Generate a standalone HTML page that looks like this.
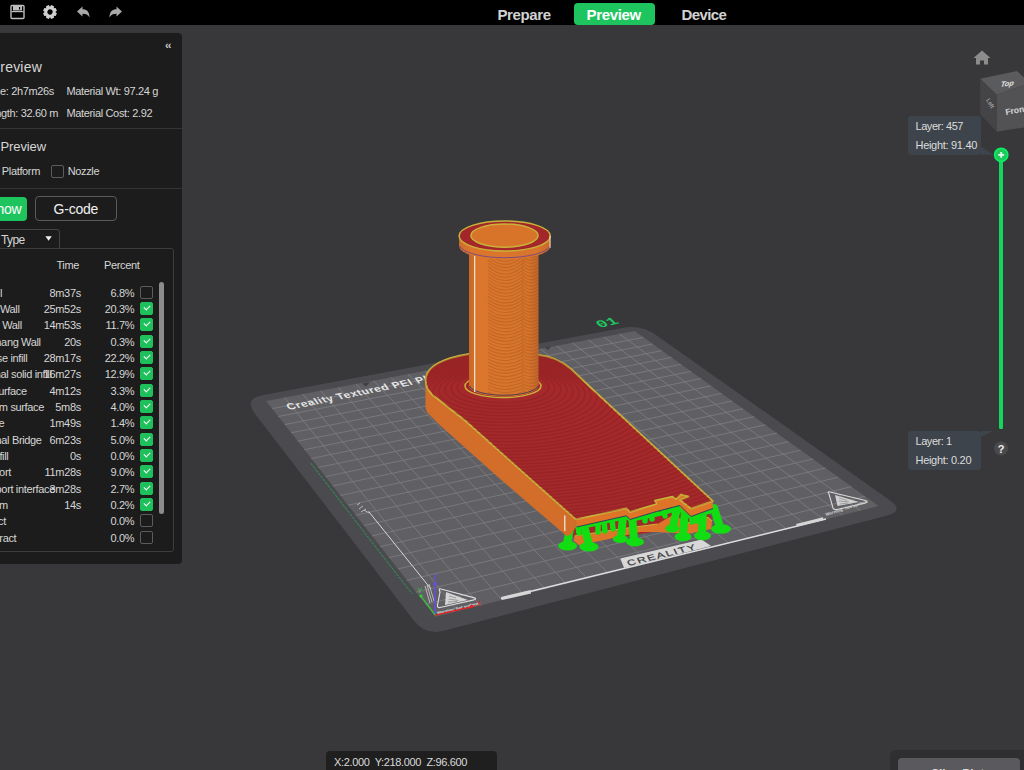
<!DOCTYPE html>
<html><head><meta charset="utf-8">
<style>
html,body{margin:0;padding:0}
body{width:1024px;height:770px;overflow:hidden;position:relative;background:#38383a;font-family:"Liberation Sans",sans-serif;color:#d8d8d8}
.a{position:absolute;white-space:pre;line-height:1}
#scene{position:absolute;left:0;top:0}
#topbar{position:absolute;left:0;top:0;width:1024px;height:25px;background:#000}
#panel{position:absolute;left:-10px;top:33px;width:192px;height:530.5px;background:#1c1c1c;border-radius:4px}
.t11{font-size:11px;letter-spacing:-0.35px;color:#d6d6d6}
.cb{position:absolute;left:150px;width:11px;height:11px;border:1px solid #5c5c5c;border-radius:2px}
.cbk{background:#1ec05c;border-color:#1ec05c}
.cbk::after{content:"";position:absolute;left:3px;top:2px;width:5px;height:3px;border-left:1.5px solid #fff;border-bottom:1.5px solid #fff;transform:rotate(-45deg)}
.tip{position:absolute;background:#3d444b;border-radius:3px}
</style></head><body>
<svg id="scene" width="1024" height="770" viewBox="0 0 1024 770">
<defs>
<linearGradient id="tubeg2" x1="469" x2="538.5" y1="0" y2="0" gradientUnits="userSpaceOnUse">
<stop offset="0" stop-color="#c66826"/><stop offset="0.08" stop-color="#d2702a"/><stop offset="0.12" stop-color="#dc762d"/><stop offset="0.85" stop-color="#d8742c"/><stop offset="1" stop-color="#c0662a"/></linearGradient>
<linearGradient id="tubeg" x1="459" x2="550.5" y1="0" y2="0" gradientUnits="userSpaceOnUse">
<stop offset="0" stop-color="#cf6e2a"/><stop offset="0.15" stop-color="#dc762d"/><stop offset="0.85" stop-color="#d8742c"/><stop offset="1" stop-color="#c8692a"/></linearGradient>
<clipPath id="slabclip"><path d="M537.8,354.8 C552,356 563,362 571,369 L603.4,399.4 L712.9,501.2 L691,508.7 L680,500 L688.6,496.7 L681.3,494.5 L676,499 L672.5,496.7 L655,500.4 L656.4,504 L630,512.1 L626.4,508.4 L575.9,519.4 L465,420.5 L447.5,406.8 L437.7,399 C428,393 424.5,386 426,377 C428.5,366 444,358 469,354 Z"/></clipPath>
<clipPath id="tubeclip"><path d="M469,250 L469,386 A34.75,10.5 0 0 0 538.5,386 L538.5,250 Z"/></clipPath>
</defs>
<path d="M255.1,413.9 Q243.5,398.8 262.2,395.3 L622.5,327.9 Q641.2,324.4 656.7,335.4 L889.5,499.9 Q905.0,510.9 886.6,515.7 L443.8,630.8 Q425.4,635.6 413.8,620.5 Z" fill="#4b4b4f"/>
<polygon points="266.2,400.9 634.7,331.0 878.6,506.1 435.5,616.7" fill="#606064"/>
<g stroke="#7f7f83" stroke-width="0.8">
<line x1="284.4" y1="397.4" x2="457.9" y2="611.1"/>
<line x1="272.3" y1="408.6" x2="643.6" y2="337.4"/>
<line x1="302.5" y1="394.0" x2="480.1" y2="605.6"/>
<line x1="278.5" y1="416.5" x2="652.7" y2="344.0"/>
<line x1="320.5" y1="390.6" x2="502.1" y2="600.1"/>
<line x1="284.8" y1="424.6" x2="662.0" y2="350.6"/>
<line x1="338.2" y1="387.2" x2="523.8" y2="594.7"/>
<line x1="291.2" y1="432.8" x2="671.5" y2="357.4"/>
<line x1="355.9" y1="383.9" x2="545.3" y2="589.3"/>
<line x1="297.8" y1="441.2" x2="681.1" y2="364.3"/>
<line x1="373.4" y1="380.6" x2="566.6" y2="584.0"/>
<line x1="304.5" y1="449.7" x2="690.9" y2="371.4"/>
<line x1="390.7" y1="377.3" x2="587.6" y2="578.7"/>
<line x1="311.4" y1="458.5" x2="700.9" y2="378.6"/>
<line x1="407.9" y1="374.0" x2="608.4" y2="573.5"/>
<line x1="318.4" y1="467.4" x2="711.1" y2="385.9"/>
<line x1="425.0" y1="370.8" x2="629.0" y2="568.4"/>
<line x1="325.6" y1="476.6" x2="721.6" y2="393.4"/>
<line x1="441.9" y1="367.6" x2="649.4" y2="563.3"/>
<line x1="332.9" y1="485.9" x2="732.2" y2="401.0"/>
<line x1="458.7" y1="364.4" x2="669.6" y2="558.3"/>
<line x1="340.4" y1="495.5" x2="743.0" y2="408.8"/>
<line x1="475.3" y1="361.2" x2="689.6" y2="553.3"/>
<line x1="348.1" y1="505.2" x2="754.1" y2="416.7"/>
<line x1="491.8" y1="358.1" x2="709.3" y2="548.4"/>
<line x1="355.9" y1="515.2" x2="765.4" y2="424.8"/>
<line x1="508.2" y1="355.0" x2="728.9" y2="543.5"/>
<line x1="363.9" y1="525.5" x2="776.9" y2="433.1"/>
<line x1="524.5" y1="351.9" x2="748.3" y2="538.6"/>
<line x1="372.1" y1="535.9" x2="788.7" y2="441.5"/>
<line x1="540.6" y1="348.8" x2="767.4" y2="533.8"/>
<line x1="380.5" y1="546.6" x2="800.7" y2="450.2"/>
<line x1="556.6" y1="345.8" x2="786.4" y2="529.1"/>
<line x1="389.1" y1="557.6" x2="813.0" y2="459.0"/>
<line x1="572.5" y1="342.8" x2="805.2" y2="524.4"/>
<line x1="398.0" y1="568.9" x2="825.5" y2="468.0"/>
<line x1="588.2" y1="339.8" x2="823.8" y2="519.8"/>
<line x1="407.0" y1="580.4" x2="838.4" y2="477.2"/>
<line x1="603.8" y1="336.9" x2="842.3" y2="515.2"/>
<line x1="416.3" y1="592.2" x2="851.5" y2="486.6"/>
<line x1="619.3" y1="333.9" x2="860.5" y2="510.6"/>
<line x1="425.8" y1="604.3" x2="864.9" y2="496.3"/>
</g>

<!-- object -->
<!-- bed decorations -->
<g id="deco">
  <text x="0" y="0" font-family="Liberation Sans" font-weight="bold" font-size="11.5" letter-spacing="0.62" fill="#e6e6e6" transform="matrix(0.98,-0.2,0.5,0.72,289,410)">Creality Textured PEI Plate</text>
  <polygon points="362,383.5 370,382 366,386.5" fill="#3e3e42"/>
  <polygon points="545,347.5 551,346.5 548,350" fill="#3e3e42"/>
  <text x="0" y="0" font-family="Liberation Mono" font-weight="bold" font-size="17" fill="#1ec45e" transform="matrix(0.97,-0.24,0.55,0.55,600,328)">01</text>
  <!-- left green dashed line -->
  <line x1="310.7" y1="463.1" x2="412.2" y2="594" stroke="#2a9a55" stroke-width="1" stroke-dasharray="3,1"/>
  <!-- white diagonal line + icon -->
  <path d="M368.6,511.4 L430.7,588.6" stroke="#d8d8d8" stroke-width="1" fill="none"/>
  <path d="M357,505 l3,-2 M359,509 l4,-3 M361,512 l5,-3 M364,510 l5,3" stroke="#d0d0d0" stroke-width="0.8" fill="none"/>
  <!-- bottom-left triangle logo -->
  <path d="M441,589 Q438,588 440,592 L437.5,605 Q437,608 440,607.5 L474,599.8 Q477,598.8 474.5,597.8 Z" fill="none" stroke="#dcdcdc" stroke-width="1.2"/>
  <polygon points="446,592 468,599.9 445,605" fill="#d4d4d4"/>
  <path d="M449,596 l7,2 M448.5,599 l10,1.5 M448,602 l9,-0.5" stroke="#8a8a8a" stroke-width="0.8"/>
  <path d="M425,586 L430,603 M427,585 L432,602 M429,584 L434,601" stroke="#cfcfcf" stroke-width="0.8"/>
  <!-- axes -->
  <line x1="435.2" y1="615.1" x2="435.2" y2="583" stroke="#6a4af0" stroke-width="1.3"/>
  <polygon points="433.2,585 437.2,585 435.2,580" fill="#6a4af0"/>
  <text x="433.5" y="579" font-family="Liberation Sans" font-size="7" fill="#6a4af0">Z</text>
  <line x1="435.2" y1="615.1" x2="421" y2="596.5" stroke="#30d030" stroke-width="1.2"/>
  <circle cx="421" cy="596" r="1.6" fill="#30d030"/>
  <text x="417.5" y="593" font-family="Liberation Sans" font-size="7" fill="#30d030">Y</text>
  <text x="0" y="0" font-family="Liberation Sans" font-size="4.3" font-weight="bold" fill="#e0e0e0" transform="matrix(0.97,-0.23,0.3,0.9,437.5,614.5)">Warning: hot surface</text>
  <line x1="435.2" y1="615.1" x2="473" y2="606.5" stroke="#e02020" stroke-width="1.3"/>
  <polygon points="470,605 476,605.5 471,608.5" fill="#e02020"/>
  <text x="476.5" y="605.5" font-family="Liberation Sans" font-size="7" fill="#e02020">X</text>
  <!-- bottom edge white ruler -->
  <polyline points="501,598.5 530,591.5 826,519" fill="none" stroke="#dedede" stroke-width="1.4"/>
  <polygon points="501,597 530.5,590 531,593.5 502,600" fill="#d6d6d6"/>
  <polygon points="796,524 823,517.3 823.5,520 797,526.5" fill="#d6d6d6"/>
  <!-- CREALITY label -->
  <polygon points="620.3,558.6 701.6,539.5 711.1,545.9 624.1,568.1" fill="#d8d8d8"/>
  <text x="0" y="0" font-family="Liberation Sans" font-weight="normal" font-size="12" letter-spacing="1.6" fill="#3a3a3c" stroke="#3a3a3c" stroke-width="0.3" transform="matrix(0.97,-0.24,0.3,0.62,628.5,566)">CREALITY</text>
  <!-- right triangle logo -->
  <path d="M830,492 Q827,491 829,494 L833,508 Q834,510 837,509.5 L865,503 Q868,502 865.5,500.5 Z" fill="none" stroke="#d8d8d8" stroke-width="1.1"/>
  <polygon points="835,495 859,502 837.5,506" fill="#cfcfcf"/>
  <path d="M839,498 l8,2.5 M839,501 l10,1 M840,504 l8,-1" stroke="#8a8a8a" stroke-width="0.7"/>
  <text x="0" y="0" font-family="Liberation Sans" font-size="4.5" font-weight="bold" fill="#d0d0d0" transform="matrix(0.95,-0.3,0.3,0.9,826,516)">Warning: hot surface</text>
</g>
<g id="obj">
  <!-- lower base strips (behind supports) -->
  <polygon fill="#a3262a" points="568.6,529.2 618.4,521 630,518 655,512 674,509 690,513 708,513 712,518 700,525 660,531 620,537 577,543"/>
  <polygon fill="#dd7428" points="574.4,536 618.4,529.2 657.6,524 674.2,514.3 686.9,523.1 708.4,517.2 712,521 711.3,529 688.8,533.8 657.6,532 640,531.9 618.4,537 579.3,545.3 574,541"/>
  <polyline fill="none" stroke="#c9b23a" stroke-width="1" points="574.4,536 618.4,529.2 657.6,524"/>
  <polyline fill="none" stroke="#c9b23a" stroke-width="1" points="686.9,523.1 708.4,517.2 712,521"/>
  <!-- supports -->
  <g stroke="#12dc12" stroke-linecap="round" fill="none">
    <path stroke-width="8" d="M571,524 L567,543 M584,525 L589,545 M623,516 L621,537 M632,514 L634,540 M677,508 L673,527 M685,510 L683,535 M703,508 L702,533 M714,508 L720,527"/>
    <path stroke-width="5.5" d="M578,526 L579,533 M598,522 L598,532 M604,521 L605,531 M612,519 L613,529 M645,512 L645,521 M652,510 L652,519 M662,507 L665,516 M692,513 L692,522 M697,512 L697,521"/>
  </g>
  <g fill="#12dc12">
    <polygon points="576,524 626,513 630,517 656,509 660,512 676,506 690,514 712,507 713,513 690,519 678,511 660,516 630,522 626,519 578,530"/>
    <ellipse cx="567.6" cy="545.8" rx="9.5" ry="4.8"/>
    <ellipse cx="589" cy="546.8" rx="9.5" ry="4.8"/>
    <ellipse cx="620.3" cy="539" rx="7.5" ry="4"/>
    <ellipse cx="635" cy="541.9" rx="9" ry="4.5"/>
    <ellipse cx="672.2" cy="528.5" rx="7" ry="4"/>
    <ellipse cx="683" cy="536.8" rx="8.5" ry="4.5"/>
    <ellipse cx="702.5" cy="535.8" rx="8.5" ry="4.5"/>
    <ellipse cx="721" cy="529" rx="10" ry="4.8"/>
  </g>
  <!-- slab wall -->
  <path fill="#d26e2a" d="M425.4,376 L425.5,406.8 C426,410 427,412 428,413.3 L434.5,419.8 L439.7,425 L501.3,480 L566.6,536.1 L570,535 L575.9,527 L575.9,519.4 L465,420.5 L447.5,406.8 L437.7,399 C428,393 424.5,386 426,377 Z"/>
  <line x1="564.8" y1="515.5" x2="564.8" y2="531" stroke="#f0f0f0" stroke-width="1.2"/>
  <!-- front face bands -->
  <polygon fill="#dd7428" points="575.9,519.4 626.4,508.4 630,512.1 656.4,504 655,500.4 672.5,496.7 676,499 681.3,494.5 688.6,496.7 680,500 691,508.7 712.9,501.2 713,508.5 691,516.5 680,507.5 680,505 656.4,511.5 630,519.5 626.4,515.8 576.5,527"/>
  <polyline fill="none" stroke="#1e2a6a" stroke-width="0.8" points="576.5,527 626.4,515.8 630,519.5 656.4,511.5 680,505.5 691,516.5 713,508.5"/>
  <!-- slab top -->
  <path fill="#a52a2c" stroke="#c9b23a" stroke-width="1.8" stroke-linejoin="round" d="M537.8,354.8 C552,356 563,362 571,369 L603.4,399.4 L712.9,501.2 L691,508.7 L680,500 L688.6,496.7 L681.3,494.5 L676,499 L672.5,496.7 L655,500.4 L656.4,504 L630,512.1 L626.4,508.4 L575.9,519.4 L465,420.5 L447.5,406.8 L437.7,399 C428,393 424.5,386 426,377 C428.5,366 444,358 469,354 Z"/>
<g clip-path="url(#slabclip)" fill="none" stroke="#7e1a1e" stroke-width="1.6" opacity="0.32"><ellipse cx="503" cy="387.2" rx="46.0" ry="15.6"/><ellipse cx="503" cy="388.4" rx="52.0" ry="17.7"/><ellipse cx="503" cy="389.6" rx="58.0" ry="19.7"/><ellipse cx="503" cy="390.8" rx="64.0" ry="21.8"/><ellipse cx="503" cy="392.0" rx="70.0" ry="23.8"/><ellipse cx="503" cy="393.2" rx="76.0" ry="25.8"/><ellipse cx="503" cy="394.4" rx="82.0" ry="27.9"/><ellipse cx="503" cy="395.6" rx="88.0" ry="29.9"/><ellipse cx="503" cy="396.8" rx="94.0" ry="32.0"/><ellipse cx="503" cy="398.0" rx="100.0" ry="34.0"/><ellipse cx="503" cy="399.2" rx="106.0" ry="36.0"/><ellipse cx="503" cy="400.4" rx="112.0" ry="38.1"/><ellipse cx="503" cy="401.6" rx="118.0" ry="40.1"/><ellipse cx="503" cy="402.8" rx="124.0" ry="42.2"/><ellipse cx="503" cy="404.0" rx="130.0" ry="44.2"/><ellipse cx="503" cy="405.2" rx="136.0" ry="46.2"/><ellipse cx="503" cy="406.4" rx="142.0" ry="48.3"/><ellipse cx="503" cy="407.6" rx="148.0" ry="50.3"/><ellipse cx="503" cy="408.8" rx="154.0" ry="52.4"/><ellipse cx="503" cy="410.0" rx="160.0" ry="54.4"/><ellipse cx="503" cy="411.2" rx="166.0" ry="56.4"/><ellipse cx="503" cy="412.4" rx="172.0" ry="58.5"/><ellipse cx="503" cy="413.6" rx="178.0" ry="60.5"/><ellipse cx="503" cy="414.8" rx="184.0" ry="62.6"/><ellipse cx="503" cy="416.0" rx="190.0" ry="64.6"/><ellipse cx="503" cy="417.2" rx="196.0" ry="66.6"/><ellipse cx="503" cy="418.4" rx="202.0" ry="68.7"/><ellipse cx="503" cy="419.6" rx="208.0" ry="70.7"/><ellipse cx="503" cy="420.8" rx="214.0" ry="72.8"/><ellipse cx="503" cy="422.0" rx="220.0" ry="74.8"/><ellipse cx="503" cy="423.2" rx="226.0" ry="76.8"/><ellipse cx="503" cy="424.4" rx="232.0" ry="78.9"/><ellipse cx="503" cy="425.6" rx="238.0" ry="80.9"/><ellipse cx="503" cy="426.8" rx="244.0" ry="83.0"/><ellipse cx="503" cy="428.0" rx="250.0" ry="85.0"/><ellipse cx="503" cy="429.2" rx="256.0" ry="87.0"/><ellipse cx="503" cy="430.4" rx="262.0" ry="89.1"/><ellipse cx="503" cy="431.6" rx="268.0" ry="91.1"/><ellipse cx="503" cy="432.8" rx="274.0" ry="93.2"/><ellipse cx="503" cy="434.0" rx="280.0" ry="95.2"/><ellipse cx="503" cy="435.2" rx="286.0" ry="97.2"/><ellipse cx="503" cy="436.4" rx="292.0" ry="99.3"/><ellipse cx="503" cy="437.6" rx="298.0" ry="101.3"/><ellipse cx="503" cy="438.8" rx="304.0" ry="103.4"/><ellipse cx="503" cy="440.0" rx="310.0" ry="105.4"/><ellipse cx="503" cy="441.2" rx="316.0" ry="107.4"/><ellipse cx="503" cy="442.4" rx="322.0" ry="109.5"/></g>
  <!-- cylinder base ring -->
  <ellipse cx="503" cy="386" rx="38" ry="11.5" fill="#a3262a" stroke="#c9b23a" stroke-width="1.5"/>
  <!-- tube -->
  <path d="M469,250 L469,386 A34.75,10.5 0 0 0 538.5,386 L538.5,250 Z" fill="url(#tubeg2)"/>
  <path d="M469.5,386 A34.5,10.5 0 0 0 538,386" fill="none" stroke="#1e2a6a" stroke-width="0.8"/>
  <g id="moire" clip-path="url(#tubeclip)"><path d="M488,250.0 Q505,266.0 523,250.0 M522,251.5 Q531,262.7 540,251.5 M488,253.3 Q505,269.1 523,253.3 M522,254.8 Q531,265.9 540,254.8 M488,256.6 Q505,272.2 523,256.6 M522,258.1 Q531,269.0 540,258.1 M488,259.9 Q505,275.3 523,259.9 M522,261.4 Q531,272.2 540,261.4 M488,263.2 Q505,278.4 523,263.2 M522,264.7 Q531,275.4 540,264.7 M488,266.5 Q505,281.6 523,266.5 M522,268.0 Q531,278.5 540,268.0 M488,269.8 Q505,284.7 523,269.8 M522,271.3 Q531,281.7 540,271.3 M488,273.1 Q505,287.8 523,273.1 M522,274.6 Q531,284.9 540,274.6 M488,276.4 Q505,290.9 523,276.4 M522,277.9 Q531,288.0 540,277.9 M488,279.7 Q505,294.0 523,279.7 M522,281.2 Q531,291.2 540,281.2 M488,283.0 Q505,297.1 523,283.0 M522,284.5 Q531,294.4 540,284.5 M488,286.3 Q505,300.2 523,286.3 M522,287.8 Q531,297.5 540,287.8 M488,289.6 Q505,303.3 523,289.6 M522,291.1 Q531,300.7 540,291.1 M488,292.9 Q505,306.4 523,292.9 M522,294.4 Q531,303.9 540,294.4 M488,296.2 Q505,309.6 523,296.2 M522,297.7 Q531,307.1 540,297.7 M488,299.5 Q505,312.7 523,299.5 M522,301.0 Q531,310.2 540,301.0 M488,302.8 Q505,315.8 523,302.8 M522,304.3 Q531,313.4 540,304.3 M488,306.1 Q505,318.9 523,306.1 M522,307.6 Q531,316.6 540,307.6 M488,309.4 Q505,322.0 523,309.4 M522,310.9 Q531,319.7 540,310.9 M488,312.7 Q505,325.1 523,312.7 M522,314.2 Q531,322.9 540,314.2 M488,316.0 Q505,328.2 523,316.0 M522,317.5 Q531,326.1 540,317.5 M488,319.3 Q505,331.3 523,319.3 M522,320.8 Q531,329.2 540,320.8 M488,322.6 Q505,334.5 523,322.6 M522,324.1 Q531,332.4 540,324.1 M488,325.9 Q505,337.6 523,325.9 M522,327.4 Q531,335.6 540,327.4 M488,329.2 Q505,340.7 523,329.2 M522,330.7 Q531,338.7 540,330.7 M488,332.5 Q505,343.8 523,332.5 M522,334.0 Q531,341.9 540,334.0 M488,335.8 Q505,346.9 523,335.8 M522,337.3 Q531,345.1 540,337.3 M488,339.1 Q505,350.0 523,339.1 M522,340.6 Q531,348.2 540,340.6 M488,342.4 Q505,353.1 523,342.4 M522,343.9 Q531,351.4 540,343.9 M488,345.7 Q505,356.2 523,345.7 M522,347.2 Q531,354.6 540,347.2 M488,349.0 Q505,359.3 523,349.0 M522,350.5 Q531,357.7 540,350.5 M488,352.3 Q505,362.5 523,352.3 M522,353.8 Q531,360.9 540,353.8 M488,355.6 Q505,365.6 523,355.6 M522,357.1 Q531,364.1 540,357.1 M488,358.9 Q505,368.7 523,358.9 M522,360.4 Q531,367.2 540,360.4 M488,362.2 Q505,371.8 523,362.2 M522,363.7 Q531,370.4 540,363.7 M488,365.5 Q505,374.9 523,365.5 M522,367.0 Q531,373.6 540,367.0 M488,368.8 Q505,378.0 523,368.8 M522,370.3 Q531,376.7 540,370.3 M488,372.1 Q505,381.1 523,372.1 M522,373.6 Q531,379.9 540,373.6 M488,375.4 Q505,384.2 523,375.4 M522,376.9 Q531,383.1 540,376.9 M488,378.7 Q505,387.3 523,378.7 M522,380.2 Q531,386.3 540,380.2 M488,382.0 Q505,390.5 523,382.0 M522,383.5 Q531,389.4 540,383.5 M488,385.3 Q505,393.6 523,385.3 M522,386.8 Q531,392.6 540,386.8 M488,388.6 Q505,396.7 523,388.6 M522,390.1 Q531,395.8 540,390.1 M488,391.9 Q505,399.8 523,391.9 M522,393.4 Q531,398.9 540,393.4" fill="none" stroke="#9c521c" stroke-width="1.1" opacity="0.38"/>
</g>
  <line x1="474.7" y1="255" x2="474.7" y2="392" stroke="#f4e8d8" stroke-width="1.2"/>
  <!-- flange -->
  <path d="M459.1,236 L459.1,246 A45.6,13.5 0 0 0 550.4,246 L550.4,236 Z" fill="url(#tubeg)"/>
  <path d="M459.6,246 A45.6,13.5 0 0 0 550,246" fill="none" stroke="#5a3aa0" stroke-width="0.7"/>
  <ellipse cx="504.7" cy="236" rx="45.6" ry="15" fill="#a3262a" stroke="#c9b23a" stroke-width="1.5"/>
  <ellipse cx="504.5" cy="235.6" rx="33.6" ry="11.6" fill="#d8742a" stroke="#c9b23a" stroke-width="1.5"/>
  <line x1="550" y1="236" x2="550" y2="248" stroke="#f0e0d0" stroke-width="1"/>
</g>
</svg>

<div id="topbar">
  <svg width="130" height="25" style="position:absolute;left:0;top:0">
    <g fill="none" stroke="#bdbdbd" stroke-width="1.4">
      <rect x="11" y="5.5" width="13" height="13" rx="1"/>
    </g>
    <rect x="13" y="6" width="9" height="4.5" fill="#bdbdbd"/>
    <rect x="19" y="7" width="1.2" height="2.5" fill="#000"/>
    <rect x="11.5" y="11" width="12" height="1.2" fill="#bdbdbd"/>
    <g transform="translate(50,12) rotate(22.5)"><path d="M6.83,-1.53 L6.83,1.53 L4.90,2.01 L4.89,2.04 L5.91,3.75 L3.75,5.91 L2.04,4.89 L2.01,4.90 L1.53,6.83 L-1.53,6.83 L-2.01,4.90 L-2.04,4.89 L-3.75,5.91 L-5.91,3.75 L-4.89,2.04 L-4.90,2.01 L-6.83,1.53 L-6.83,-1.53 L-4.90,-2.01 L-4.89,-2.04 L-5.91,-3.75 L-3.75,-5.91 L-2.04,-4.89 L-2.01,-4.90 L-1.53,-6.83 L1.53,-6.83 L2.01,-4.90 L2.04,-4.89 L3.75,-5.91 L5.91,-3.75 L4.89,-2.04 L4.90,-2.01 Z M2.6,0 A2.6,2.6 0 1 0 -2.6,0 A2.6,2.6 0 1 0 2.6,0 Z" fill="#d0d0d0" fill-rule="evenodd"/></g>
    <path d="M77,11.5 L82.5,6.5 L82.5,9.3 C86.5,9.3 89.5,11.5 89.5,17.5 C88,14.5 86,13.7 82.5,13.7 L82.5,16.5 Z" fill="#a8a8a8"/>
    <path d="M122,11.5 L116.5,6.5 L116.5,9.3 C112.5,9.3 109.5,11.5 109.5,17.5 C111,14.5 113,13.7 116.5,13.7 L116.5,16.5 Z" fill="#a8a8a8"/>
  </svg>
  <div style="position:absolute;left:573.5px;top:2.5px;width:81px;height:22.5px;background:#1ec45e;border-radius:4px"></div>
  <div class="a" style="left:497.5px;top:6.5px;font-size:15px;font-weight:bold;color:#d2d2d2;letter-spacing:-0.4px">Prepare</div>
  <div class="a" style="left:586.5px;top:6.5px;font-size:15px;font-weight:bold;color:#fff;letter-spacing:-0.35px">Preview</div>
  <div class="a" style="left:681.5px;top:6.5px;font-size:15px;font-weight:bold;color:#d2d2d2;letter-spacing:-0.6px">Device</div>
</div>

<div id="panel"></div>
<div class="a" style="left:165px;top:40px;font-size:11px;color:#cfcfcf;font-weight:bold;letter-spacing:-1px">&#8249;&#8249;</div>
<div class="a" style="left:0.3px;top:60.3px;font-size:14px;color:#d6d6d6;letter-spacing:0.2px">review</div>
<div class="a t11" style="right:970px;top:86px">Time: 2h7m26s</div>
<div class="a t11" style="left:66.5px;top:86px">Material Wt: 97.24 g</div>
<div class="a t11" style="right:966px;top:108px">Length: 32.60 m</div>
<div class="a t11" style="left:66.5px;top:108px">Material Cost: 2.92</div>
<div style="position:absolute;left:0;top:128px;width:182px;height:1px;background:#343434"></div>
<div class="a" style="left:0.5px;top:139.5px;font-size:13px;color:#d6d6d6;letter-spacing:-0.1px">Preview</div>
<div class="a t11" style="right:984px;top:166px">Platform</div>
<div class="cb" style="left:51px;top:165px"></div>
<div class="a t11" style="left:67.7px;top:166px">Nozzle</div>
<div style="position:absolute;left:0;top:188px;width:182px;height:1px;background:#343434"></div>
<div style="position:absolute;left:-20px;top:196.5px;width:47px;height:24.5px;background:#1ec45e;border-radius:4px"></div>
<div class="a" style="right:1002.8px;top:201.5px;font-size:14px;color:#fff;letter-spacing:-0.3px">Show</div>
<div style="position:absolute;left:35px;top:196px;width:80px;height:23px;border:1px solid #5a5a5a;border-radius:4px"></div>
<div class="a" style="left:53.6px;top:201.5px;font-size:14px;color:#f0f0f0;letter-spacing:-0.25px">G-code</div>
<div style="position:absolute;left:-10px;top:229px;width:68px;height:30px;border:1px solid #444;border-radius:3px"></div>
<div class="a" style="left:1px;top:234px;font-size:12px;color:#d6d6d6;letter-spacing:-0.6px">Type</div>
<svg style="position:absolute;left:45px;top:236px" width="8" height="6"><path d="M0.4,0.3 L6.8,0.3 L3.6,4.8 Z" fill="#f0f0f0"/></svg>
<div style="position:absolute;left:-10px;top:248px;width:181.5px;height:302px;border:1px solid #3d3d3d;border-radius:3px;background:#1c1c1c"></div>
<div class="a t11" style="left:56.4px;top:260px">Time</div>
<div class="a t11" style="left:104px;top:260px">Percent</div>
<div class="a t11" style="right:1021.9px;top:287.5px">Skirt l</div>
<div class="a t11" style="right:943.2px;top:287.5px">8m37s</div>
<div class="a t11" style="right:889.8px;top:287.5px">6.8%</div>
<div class="cb" style="left:140px;top:285.5px"></div>
<div class="a t11" style="right:1004.5px;top:303.8px">Outer Wall</div>
<div class="a t11" style="right:943.2px;top:303.8px">25m52s</div>
<div class="a t11" style="right:889.8px;top:303.8px">20.3%</div>
<div class="cb cbk" style="left:140px;top:301.8px"></div>
<div class="a t11" style="right:1002.2px;top:320.2px">Inner Wall</div>
<div class="a t11" style="right:943.2px;top:320.2px">14m53s</div>
<div class="a t11" style="right:889.8px;top:320.2px">11.7%</div>
<div class="cb cbk" style="left:140px;top:318.2px"></div>
<div class="a t11" style="right:983.3px;top:336.5px">Overhang Wall</div>
<div class="a t11" style="right:943.2px;top:336.5px">20s</div>
<div class="a t11" style="right:889.8px;top:336.5px">0.3%</div>
<div class="cb cbk" style="left:140px;top:334.5px"></div>
<div class="a t11" style="right:996.7px;top:352.8px">Sparse infill</div>
<div class="a t11" style="right:943.2px;top:352.8px">28m17s</div>
<div class="a t11" style="right:889.8px;top:352.8px">22.2%</div>
<div class="cb cbk" style="left:140px;top:350.8px"></div>
<div class="a t11" style="right:972.5px;top:369.1px">Internal solid infill</div>
<div class="a t11" style="right:943.2px;top:369.1px">16m27s</div>
<div class="a t11" style="right:889.8px;top:369.1px">12.9%</div>
<div class="cb cbk" style="left:140px;top:367.1px"></div>
<div class="a t11" style="right:997.3px;top:385.5px">Top surface</div>
<div class="a t11" style="right:943.2px;top:385.5px">4m12s</div>
<div class="a t11" style="right:889.8px;top:385.5px">3.3%</div>
<div class="cb cbk" style="left:140px;top:383.5px"></div>
<div class="a t11" style="right:980.0px;top:401.8px">Bottom surface</div>
<div class="a t11" style="right:943.2px;top:401.8px">5m8s</div>
<div class="a t11" style="right:889.8px;top:401.8px">4.0%</div>
<div class="cb cbk" style="left:140px;top:399.8px"></div>
<div class="a t11" style="right:1019.8px;top:418.1px">Bridge</div>
<div class="a t11" style="right:943.2px;top:418.1px">1m49s</div>
<div class="a t11" style="right:889.8px;top:418.1px">1.4%</div>
<div class="cb cbk" style="left:140px;top:416.1px"></div>
<div class="a t11" style="right:982.4px;top:434.5px">Internal Bridge</div>
<div class="a t11" style="right:943.2px;top:434.5px">6m23s</div>
<div class="a t11" style="right:889.8px;top:434.5px">5.0%</div>
<div class="cb cbk" style="left:140px;top:432.5px"></div>
<div class="a t11" style="right:1015.6px;top:450.8px">Gap infill</div>
<div class="a t11" style="right:943.2px;top:450.8px">0s</div>
<div class="a t11" style="right:889.8px;top:450.8px">0.0%</div>
<div class="cb cbk" style="left:140px;top:448.8px"></div>
<div class="a t11" style="right:1013.1px;top:467.1px">Support</div>
<div class="a t11" style="right:943.2px;top:467.1px">11m28s</div>
<div class="a t11" style="right:889.8px;top:467.1px">9.0%</div>
<div class="cb cbk" style="left:140px;top:465.1px"></div>
<div class="a t11" style="right:969.1px;top:483.5px">Support interface</div>
<div class="a t11" style="right:943.2px;top:483.5px">3m28s</div>
<div class="a t11" style="right:889.8px;top:483.5px">2.7%</div>
<div class="cb cbk" style="left:140px;top:481.5px"></div>
<div class="a t11" style="right:1016.2px;top:499.8px">Brim</div>
<div class="a t11" style="right:943.2px;top:499.8px">14s</div>
<div class="a t11" style="right:889.8px;top:499.8px">0.2%</div>
<div class="cb cbk" style="left:140px;top:497.8px"></div>
<div class="a t11" style="right:1018.1px;top:516.1px">Retract</div>
<div class="a t11" style="right:889.8px;top:516.1px">0.0%</div>
<div class="cb" style="left:140px;top:514.1px"></div>
<div class="a t11" style="right:1007.7px;top:532.5px">Unretract</div>
<div class="a t11" style="right:889.8px;top:532.5px">0.0%</div>
<div class="cb" style="left:140px;top:530.5px"></div>
<div style="position:absolute;left:159px;top:282px;width:5px;height:232px;background:#8c8c8c;border-radius:2.5px"></div>

<!-- right slider -->
<svg style="position:absolute;left:960px;top:40px" width="64" height="100">
  <path d="M22,10.5 L13.5,18 L16,18 L16,24.5 L20,24.5 L20,20.5 L24,20.5 L24,24.5 L28,24.5 L28,18 L30.5,18 Z" fill="#8c8c8c"/>
  <polygon points="20.1,38.7 57,30.9 70,43 36.7,54.8" fill="#5b5b5d"/>
  <polygon points="20.1,38.7 36.7,54.8 36.7,91.7 20.1,74" fill="#444446"/>
  <polygon points="36.7,54.8 70,43 70,86.5 36.7,91.7" fill="#525254"/>
  <text x="0" y="0" font-size="7.5" fill="#e0e0e0" font-weight="bold" transform="translate(40,47) rotate(-6) skewX(-25)" font-family="Liberation Sans">Top</text>
  <text x="46" y="75" font-size="8.5" fill="#d8d8d8" font-weight="bold" transform="rotate(-10 46 75)" font-family="Liberation Sans">Front</text>
  <text x="26" y="60" font-size="6" fill="#bbb" transform="rotate(60 26 60)" font-family="Liberation Sans">Left</text>
</svg>
<div class="tip" style="left:907.5px;top:116px;width:73.5px;height:39px"></div>
<svg style="position:absolute;left:960px;top:140px" width="50" height="20"><polygon points="21,6.5 21,14.8 33.5,14.8" fill="#3d444b"/></svg>
<div class="a t11" style="left:915.5px;top:120.8px;color:#dcdcdc;letter-spacing:-0.45px">Layer: 457</div>
<div class="a t11" style="left:915.5px;top:139.6px;color:#dcdcdc;letter-spacing:-0.3px">Height: 91.40</div>
<div style="position:absolute;left:999.3px;top:155px;width:3.8px;height:274px;background:#14d65c;border-radius:1.5px"></div>
<svg style="position:absolute;left:990px;top:144px" width="22" height="22">
  <circle cx="11.2" cy="10.8" r="6.6" fill="#1ec95c" stroke="#0af064" stroke-width="1.6"/>
  <path d="M11.2,7.9 V13.7 M8.3,10.8 H14.1" stroke="#eafaef" stroke-width="1.8"/>
</svg>
<div class="tip" style="left:907.5px;top:431px;width:73.5px;height:38.5px"></div>
<svg style="position:absolute;left:960px;top:425px" width="40" height="20"><polygon points="21,6 33,6 21,12" fill="#3d444b"/></svg>
<div class="a t11" style="left:915.5px;top:435.5px;color:#dcdcdc;letter-spacing:-0.45px">Layer: 1</div>
<div class="a t11" style="left:915.5px;top:455px;color:#dcdcdc;letter-spacing:-0.3px">Height: 0.20</div>
<svg style="position:absolute;left:990px;top:437px" width="22" height="22">
  <circle cx="11" cy="11.5" r="7" fill="#4a4a4c"/>
  <text x="11" y="16" font-size="11" font-weight="bold" fill="#f0f0f0" text-anchor="middle" font-family="Liberation Sans">?</text>
</svg>

<!-- bottom -->
<div style="position:absolute;left:326px;top:751px;width:171px;height:30px;background:#1f1f1f;border-radius:4px"></div>
<div class="a" style="left:334px;top:757px;font-size:11px;color:#dadada;letter-spacing:-0.35px">X:2.000  Y:218.000  Z:96.600</div>
<div style="position:absolute;left:890px;top:750px;width:150px;height:30px;background:#2f2f31;border-radius:6px"></div>
<div style="position:absolute;left:898px;top:757.5px;width:122px;height:30px;background:#5a5a5e;border-radius:4px"></div>
<div class="a" style="left:931px;top:768px;font-size:12px;font-weight:bold;color:#ddd">Slice Plate</div>
</body></html>
